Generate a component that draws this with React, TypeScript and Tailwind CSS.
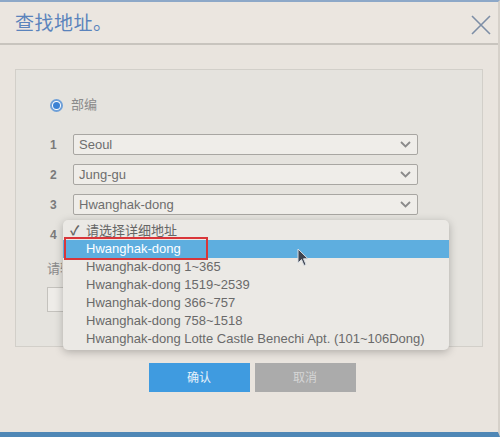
const font = { fontFamily: '"Liberation Sans", "Noto Sans CJK SC", sans-serif' };

const rows = ["Seoul", "Jung-gu", "Hwanghak-dong"];

const options = [
  "Hwanghak-dong 1~365",
  "Hwanghak-dong 1519~2539",
  "Hwanghak-dong 366~757",
  "Hwanghak-dong 758~1518",
  "Hwanghak-dong Lotte Castle Benechi Apt. (101~106Dong)",
];

function Chevron() {
  return (
    <svg width="11" height="7" viewBox="0 0 11 7" fill="none">
      <path d="M1 1l4.5 4.5L10 1" stroke="#8a8a8a" strokeWidth="1.8" />
    </svg>
  );
}

function App() {
  return (
    <div
      className="relative w-[500px] h-[437px] overflow-hidden flex flex-col bg-[#e9e4de] border-t-2 border-t-[#8da8c8] border-b-[5px] border-b-[#4f87b6] border-r-2 border-r-[#d6d1ca]"
      style={font}
    >
      {/* header */}
      <div className="h-[43px] shrink-0 flex items-center justify-between pl-[15px] pr-[7px] border-b-2 border-[#c8c4be] bg-[#ebe6e0]">
        <span className="text-[19px] text-[#5a83bc] tracking-[0.5px] mt-[3px]">查找地址。</span>
        <svg width="20" height="20" viewBox="0 0 20 20" className="mt-[4px]">
          <path d="M1 1L19 19M19 1L1 19" stroke="#7d8ea6" strokeWidth="1.6" />
        </svg>
      </div>

      {/* body */}
      <div className="px-[15px] pt-[24px]">
        <div className="h-[278px] border border-[#d2cfc9] bg-[#e5e3de] pl-[34px] pt-[28px]">
          <div className="flex items-center gap-[8px] h-[14px]">
            <span className="w-[13px] h-[13px] rounded-full border-2 border-[#6fa0d8] bg-white flex items-center justify-center">
              <span className="w-[7px] h-[7px] rounded-full bg-[#3b82d4]" />
            </span>
            <span className="text-[13px] text-[#8a8a8a]">部编</span>
          </div>

          <div className="flex flex-col gap-[9px] mt-[22px]">
            {rows.map((r, i) => (
              <div key={r} className="flex items-center h-[21px]">
                <span className="w-[23px] text-[12px] font-bold text-[#7a7a7a]">{i + 1}</span>
                <div className="w-[345px] h-[21px] border border-[#a8a6a2] rounded-[2px] bg-[#efede9] flex items-center justify-between pl-[5px] pr-[6px]">
                  <span className="text-[13px] text-[#6e6e6e]">{r}</span>
                  <Chevron />
                </div>
              </div>
            ))}
            <div className="flex items-center h-[21px]">
              <span className="w-[23px] text-[12px] font-bold text-[#7a7a7a]">4</span>
            </div>
          </div>

          <div className="mt-[14px] -ml-[3px] w-[15px] overflow-hidden whitespace-nowrap text-[13px] text-[#8a8a8a]">请输</div>
          <div className="mt-[8px] -ml-[3px] w-[360px] h-[25px] border border-[#c4c2bd] bg-[#eeece8]" />
        </div>

        {/* buttons */}
        <div className="flex justify-center gap-[5px] mt-[16px] pl-[6px]">
          <div className="w-[101px] h-[29px] bg-[#3f9be0] flex items-center justify-center text-[12px] text-[#e8f2fb]">确认</div>
          <div className="w-[101px] h-[29px] bg-[#ababab] flex items-center justify-center text-[12px] text-[#d6d6d6]">取消</div>
        </div>
      </div>

      {/* dropdown menu */}
      <div className="absolute left-[63px] top-[218px] w-[386px] py-[2px] rounded-[5px] bg-[#ebe9e5] shadow-[0_2px_8px_rgba(0,0,0,0.25)]">
        <div className="relative h-[18px] flex items-center pl-[23px] text-[13px] text-[#666]">
          <span className="absolute left-[7px] text-[13px] font-bold">✓</span>
          请选择详细地址
        </div>
        <div className="h-[18px] flex items-center pl-[23px] text-[13px] text-white bg-[#5eaedf]">Hwanghak-dong</div>
        {options.map((o) => (
          <div key={o} className="h-[18px] flex items-center pl-[23px] text-[13px] text-[#6a6a6a]">
            {o}
          </div>
        ))}
        <div className="absolute left-[1px] top-[17px] w-[144px] h-[23px] border-2 border-[#d9363a]" />
      </div>

      {/* mouse cursor */}
      <svg className="absolute left-[297px] top-[246px]" width="12" height="19" viewBox="0 0 12 19">
        <path d="M1 1L1 15L4.5 11.5L7 17.5L9 16.5L6.5 10.8L11 10.8Z" fill="#3e4450" stroke="#d8dde3" strokeWidth="1" />
      </svg>
    </div>
  );
}

export default App;
